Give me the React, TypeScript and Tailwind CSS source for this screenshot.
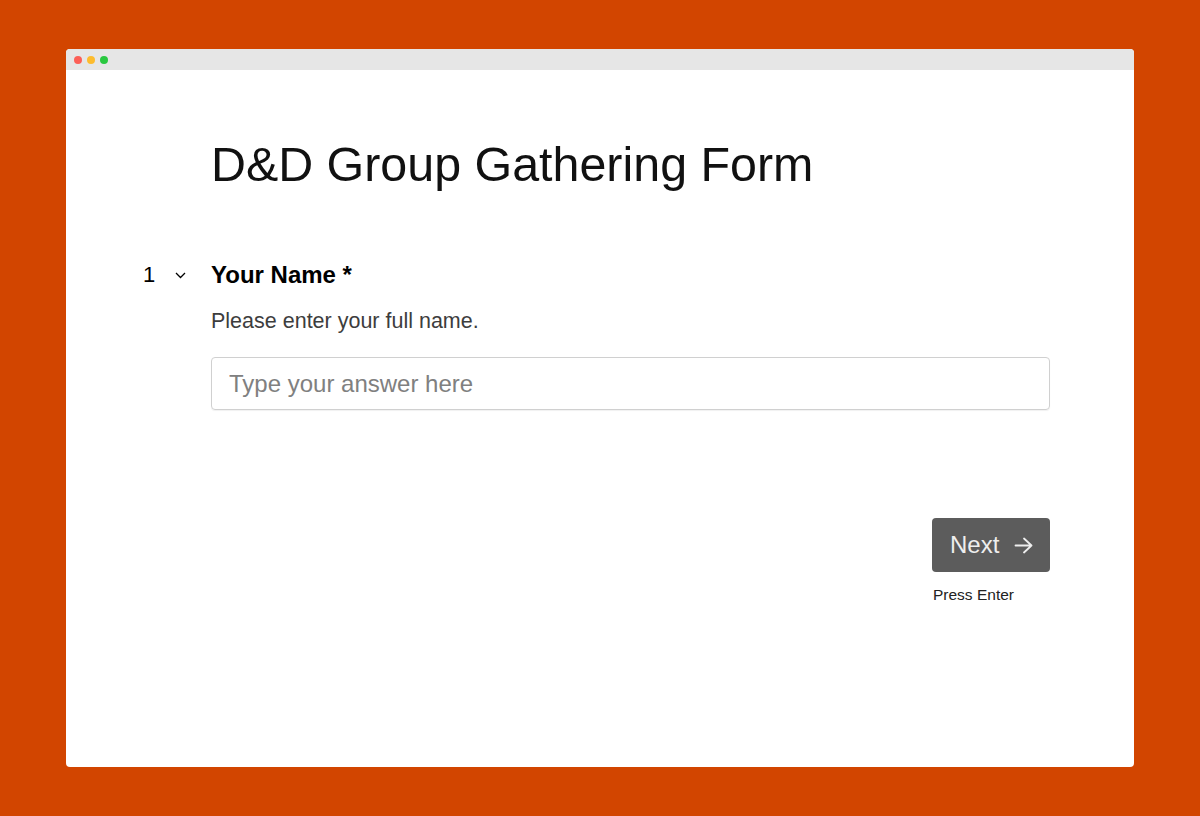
import React from 'react';

const font = { fontFamily: '"Liberation Sans", Arial, Helvetica, sans-serif' };

const TitleBar = () => (
  <div className="h-[21px] bg-[#e6e6e6] flex items-center gap-[5px] pl-[8px] shrink-0">
    <span className="w-[8px] h-[8px] rounded-full bg-[#fc5f57]" />
    <span className="w-[8px] h-[8px] rounded-full bg-[#fdbc2e]" />
    <span className="w-[8px] h-[8px] rounded-full bg-[#29c840]" />
  </div>
);

const Chevron = () => (
  <svg width="11" height="7" viewBox="0 0 11 7" fill="none" stroke="#000" strokeWidth="1.3">
    <path d="M1 1l4.5 4.5L10 1" />
  </svg>
);

const Arrow = () => (
  <svg width="19" height="17" viewBox="0 0 19 17" fill="none" stroke="#eeeeee" strokeWidth="1.8" strokeLinecap="round" strokeLinejoin="round">
    <path d="M1.5 8.5h16M10 1.5l7.5 7-7.5 7" />
  </svg>
);

export default function App() {
  return (
    <div className="w-[1200px] h-[816px] bg-[#d24500] pt-[49px] pl-[66px]" style={font}>
      <div className="w-[1068px] h-[718px] bg-white rounded-[4px] overflow-hidden flex flex-col">
        <TitleBar />
        <div className="pl-[145px] pr-[84px] pt-[66px]">
          <h1 className="text-[48.4px] leading-[56px] text-[#111] font-normal">D&amp;D Group Gathering Form</h1>

          <div className="relative mt-[69px]">
            <div className="absolute left-[-68px] top-0 h-[28px] flex items-center gap-[20px]">
              <span className="text-[22px] leading-[28px] text-black">1</span>
              <Chevron />
            </div>
            <h2 className="text-[24px] leading-[28px] font-bold text-black">Your Name *</h2>
            <p className="mt-[18px] text-[21.5px] leading-[28px] text-[#3d3d3d]">Please enter your full name.</p>
            <input
              type="text"
              placeholder="Type your answer here"
              className="mt-[22px] w-full h-[53px] border border-[#d0d0d0] rounded-[4px] px-[17px] text-[24px] text-black placeholder:text-[#808080] outline-none shadow-[0_1px_1px_rgba(0,0,0,0.06)]"
            />
          </div>

          <div className="flex justify-end mt-[108px]">
            <div className="flex flex-col items-start">
              <button className="w-[118px] h-[54px] bg-[#5c5c5c] rounded-[4px] flex items-center pl-[18px] gap-[15px] text-[24px] text-[#eeeeee]">
                <span>Next</span>
                <Arrow />
              </button>
              <span className="mt-[13px] ml-[1px] text-[15.5px] leading-[20px] text-[#222]">Press Enter</span>
            </div>
          </div>
        </div>
      </div>
    </div>
  );
}
